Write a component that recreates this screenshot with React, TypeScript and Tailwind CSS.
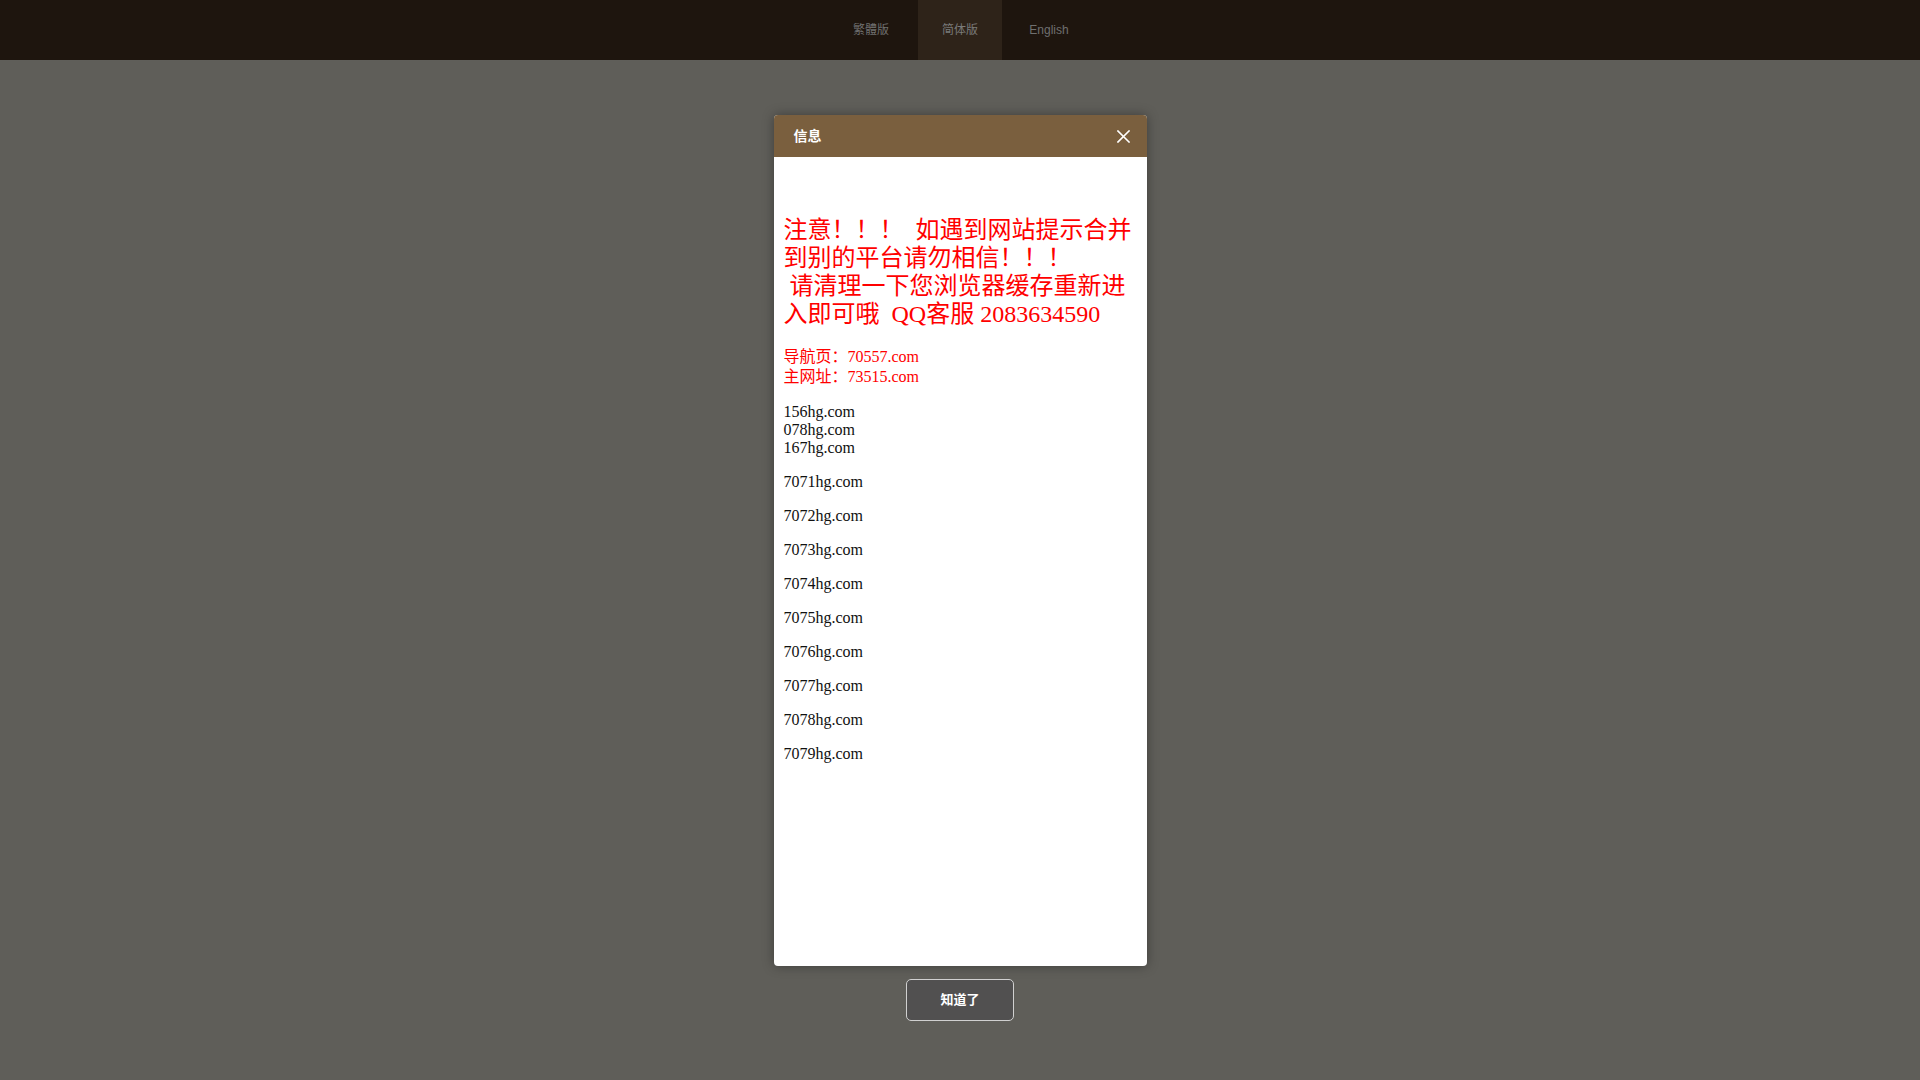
import React from "react";

const domains = [
  "7071hg.com",
  "7072hg.com",
  "7073hg.com",
  "7074hg.com",
  "7075hg.com",
  "7076hg.com",
  "7077hg.com",
  "7078hg.com",
  "7079hg.com",
];

export default function App() {
  return (
    <div className="min-h-screen w-full bg-[#5f5e59] flex flex-col items-center">
      <div className="w-full h-[60px] bg-[#1e150e] flex justify-center gap-[5px] font-['Liberation_Sans','Noto_Sans_CJK_SC',sans-serif] text-[12px] text-[#6f6f6f]">
        <div className="w-[84px] h-full flex items-center justify-center">繁體版</div>
        <div className="w-[84px] h-full flex items-center justify-center bg-[#2e2319] text-[#7a7a7a]">简体版</div>
        <div className="w-[84px] h-full flex items-center justify-center">English</div>
      </div>

      <div className="mt-[55px] w-[373px] h-[851px] bg-white rounded-[4px] shadow-[0_0_12px_rgba(0,0,0,0.35)] flex flex-col overflow-hidden">
        <div className="h-[42px] shrink-0 bg-[#7a5f3e] flex items-center justify-between pl-[20px] pr-[17px]">
          <span className="text-white text-[14px] font-bold font-['Liberation_Sans','Noto_Sans_CJK_SC',sans-serif]">信息</span>
          <svg width="13" height="13" viewBox="0 0 13 13" className="block">
            <path d="M1 1 L12 12 M12 1 L1 12" stroke="#ffffff" strokeWidth="1.6" strokeLinecap="square" />
          </svg>
        </div>
        <div className="flex-1 pl-[10px] pr-[9px] pt-[59px] font-['Liberation_Serif','Noto_Sans_CJK_SC',serif]">
          <div className="text-[#ff0000] text-[24px] leading-[28px] whitespace-nowrap">
            <div>注意！！！&nbsp;&nbsp;如遇到网站提示合并</div>
            <div>到别的平台请勿相信！！！</div>
            <div>&nbsp;请清理一下您浏览器缓存重新进</div>
            <div>入即可哦&nbsp;&nbsp;QQ客服 2083634590</div>
          </div>
          <div className="mt-[19px] text-[#ff0000] text-[16px] leading-[20px]">
            <div>导航页：70557.com</div>
            <div>主网址：73515.com</div>
          </div>
          <div className="mt-[16px] text-[#111] text-[16px] leading-[18px]">
            <div>156hg.com</div>
            <div>078hg.com</div>
            <div>167hg.com</div>
          </div>
          {domains.map((d) => (
            <div key={d} className="mt-[16px] text-[#111] text-[16px] leading-[18px]">
              {d}
            </div>
          ))}
        </div>
      </div>

      <button className="mt-[13px] w-[108px] h-[42px] rounded-[5px] border border-[#d0d0d0] bg-[#515050] text-white text-[13px] font-bold font-['Liberation_Sans','Noto_Sans_CJK_SC',sans-serif] flex items-center justify-center">
        知道了
      </button>
    </div>
  );
}
